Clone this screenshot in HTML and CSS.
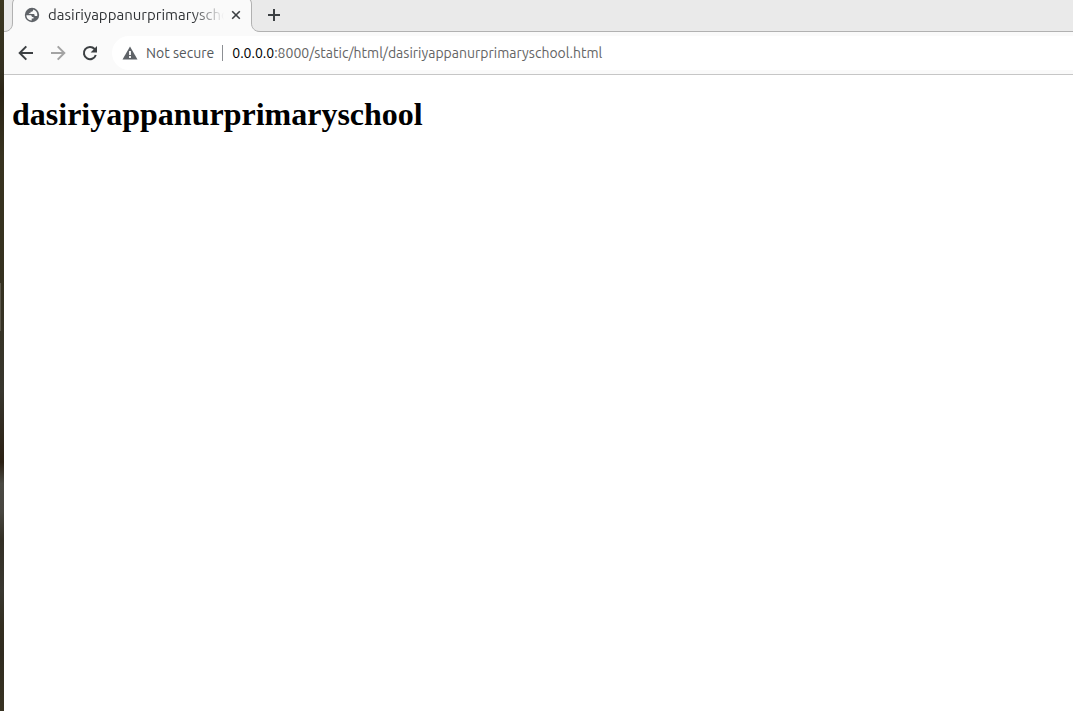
FILE: index.html
```html
<!DOCTYPE html>
<html lang="en">
<head>
<meta charset="utf-8">
<title>dasiriyappanurprimaryschool</title>
<link rel="stylesheet" href="styles.css">
</head>
<body>
<div class="desktop-edge"></div>
<div class="browser">
  <header>
    <div class="tab-strip">
      <svg class="foot" viewBox="0 0 9 9" aria-hidden="true"><path class="foot-fill" d="M8.500 0C8.500 5 5.500 8.500 0 8.500V9H9V0Z"/><path class="foot-line" d="M8.500 0C8.500 5 5.500 8.500 0 8.500"/></svg>
      <div class="tab">
        <svg class="globe" viewBox="0 0 16 16" aria-hidden="true"><circle cx="8" cy="8" r="7.200" fill="#5f6368"/><path d="M2.400 8.300h3.800c1.200 0 1.700.7 1.700 1.600h1.600v1.700H7.700v1.900C4.900 13.700 2.400 11.400 2.400 8.300ZM9.200 2.600C9.200 3.900 8.600 4.600 7.700 4.700H6.500v1.500H4.900v.9h4.300c1 0 1.400.5 1.400 1.200v.8h2.600c.6-2.800-.9-5.700-4-6.500Z" fill="#fafafa"/></svg>
        <span class="tab-title">dasiriyappanurprimaryschool</span>
        <button class="tab-close" aria-label="Close tab"><svg viewBox="0 0 16 16"><path d="M4.200 4.200l7.600 7.600M11.800 4.200l-7.600 7.600" stroke="#3c4043" stroke-width="1.600"/></svg></button>
      </div>
      <svg class="foot" viewBox="0 0 9 9" aria-hidden="true"><path class="foot-fill" d="M.5 0C.5 5 3.500 8.500 9 8.500V9H0V0Z"/><path class="foot-line" d="M.5 0C.5 5 3.500 8.500 9 8.500"/></svg>
      <button class="new-tab" aria-label="New tab"><svg viewBox="0 0 16 16"><path d="M8 2v12M2 8h12" stroke="#3c4043" stroke-width="2"/></svg></button>
    </div>
    <nav class="toolbar">
      <button class="tool" aria-label="Back"><svg viewBox="0 0 16 16"><path d="M15 8H2M8.300 1.400L1.700 8l6.600 6.600" stroke="#3c4043"/></svg></button>
      <button class="tool" aria-label="Forward"><svg viewBox="0 0 16 16"><path d="M1 8h13M7.700 1.400L14.300 8l-6.600 6.600" stroke="#a3a3a3"/></svg></button>
      <button class="tool" aria-label="Reload"><svg viewBox="0 0 16 16"><path d="M13.800 10A6.100 6.100 0 1 1 12.600 4L14 5.400" stroke="#3c4043"/><path d="M15 1v6.400H8.600Z" fill="#3c4043"/></svg></button>
      <div class="address">
        <svg class="warning" viewBox="0 0 16 16" aria-hidden="true"><path d="M8 1.500L15.500 14.500H.5Z" fill="#5f6368"/><path d="M8 6v4M8 11v2" stroke="#fff" stroke-width="1.800"/></svg>
        <span class="security">Not secure</span>
        <span class="url"><b>0.0.0.0</b>:8000/static/html/dasiriyappanurprimaryschool.html</span>
      </div>
    </nav>
  </header>
  <main class="page"><h1>dasiriyappanurprimaryschool</h1></main>
</div>
</body>
</html>
```
FILE: styles.css
```css
* { box-sizing: border-box; }

body {
  display: flex;
  min-height: 100vh;
  margin: 0;
  background: #fff;
  font: 14px/20px Ubuntu, "Noto Sans", sans-serif;
}

button {
  display: flex;
  align-items: center;
  justify-content: center;
  padding: 0;
  border: 0;
  background: none;
}

svg { display: block; flex: none; width: 16px; height: 16px; fill: none; }

.desktop-edge {
  flex: none;
  width: 4px;
  background:
    linear-gradient(#5b574a, #5b574a) 0 283px / 1px 48px no-repeat,
    linear-gradient(#3b361f 0%, #332f20 10%, #2b2416 13%, #383320 22%, #353120 40%, #38362e 55%, #2b2013 65%, #4a4943 68%, #484640 72%, #332f25 76%, #393730 83%, #332e20 88%, #302b20 92%, #383322 100%);
}

.browser { flex: 1; min-width: 0; }

.tab-strip {
  display: flex;
  align-items: flex-end;
  height: 32px;
  overflow: hidden;
  background: linear-gradient(#b1b1b1, #b1b1b1) bottom / 100% 1px no-repeat #eaeaea;
}

.foot { width: 9px; height: 9px; z-index: 1; }
.foot-fill { fill: #fafafa; }
.foot-line { stroke: #b1b1b1; }

.tab {
  display: flex;
  flex: none;
  align-items: center;
  width: 240px;
  height: 36px;
  margin: 0 -1px;
  padding: 0 7px 0 11px;
  border: 1px solid #b1b1b1;
  border-bottom: 0;
  border-radius: 8px 8px 0 0;
  background: #fafafa;
}

.tab-title {
  flex: 1;
  min-width: 0;
  margin-left: 8px;
  overflow: hidden;
  color: #303336;
  font-size: 15px;
  white-space: nowrap;
  mask-image: linear-gradient(to right, #000 calc(100% - 32px), transparent);
}

.tab-close { margin-left: 4px; }
.new-tab { width: 28px; height: 28px; margin: 0 0 3px; }

.toolbar {
  display: flex;
  align-items: center;
  height: 43px;
  padding: 0 0 1px 6px;
  border-bottom: 1px solid #c6c6c6;
  background: #fafafa;
}

.tool { width: 32px; height: 32px; }
.tool svg { stroke-width: 2; }

.address {
  display: flex;
  flex: 1;
  align-items: center;
  min-width: 0;
  height: 34px;
  margin-left: 6px;
  padding-left: 10px;
  border-radius: 17px 0 0 17px;
  background: #fff;
  white-space: nowrap;
}

.security {
  margin: 0 8px;
  color: #54585c;
}

.url {
  padding-left: 9px;
  border-left: 1px solid #8c8f93;
  line-height: 16px;
  color: #646464;
}

.url b { color: #000; font-weight: 400; }

.page { padding: 21px 8px; }

.page h1 {
  margin: 0;
  color: #000;
  font: bold 32px/37px "Liberation Serif", serif;
}
```
